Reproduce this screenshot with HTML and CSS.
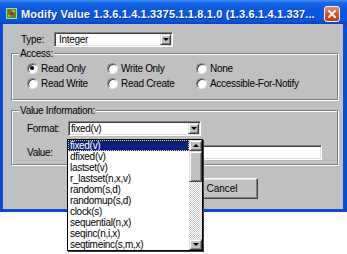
FILE: index.html
```html
<!DOCTYPE html>
<html lang="en">
<head>
  <meta charset="UTF-8">
  <title>Modify Value</title>
  <link rel="stylesheet" href="styles.css">
</head>
<body>
  <div class="window">
    <div class="titlebar">
      <svg class="app-icon" viewBox="0 0 11 11">
        <rect x="0.5" y="0.5" width="10" height="10" fill="#3f9a2a" stroke="#a6e07c"/>
        <rect x="2" y="2" width="2" height="2" fill="#d83a1e"/>
        <rect x="6" y="2" width="3" height="2" fill="#e0a020"/>
        <rect x="4" y="4" width="3" height="3" fill="#c02818"/>
        <rect x="2" y="7" width="2" height="2" fill="#e0a020"/>
        <rect x="7" y="6" width="2" height="3" fill="#d83a1e"/>
      </svg>
      <span class="title">Modify Value 1.3.6.1.4.1.3375.1.1.8.1.0 (1.3.6.1.4.1.337...</span>
      <span class="close-btn">
        <svg viewBox="0 0 14 14" width="14" height="14">
          <path d="M4 4 L10 10 M10 4 L4 10" stroke="#fff" stroke-width="2" stroke-linecap="square"/>
        </svg>
      </span>
    </div>

    <div class="client">
      <div class="type-row">
        <label>Type:</label>
        <div class="combo type-combo">
          <span class="combo-text">Integer</span>
          <span class="drop-btn"><span class="arrow-down"></span></span>
        </div>
      </div>

      <fieldset class="group access">
        <legend>Access:</legend>
        <div class="radio-grid">
          <div class="radio"><span class="radio-dot checked"></span>Read Only</div>
          <div class="radio"><span class="radio-dot"></span>Write Only</div>
          <div class="radio"><span class="radio-dot"></span>None</div>
          <div class="radio"><span class="radio-dot"></span>Read Write</div>
          <div class="radio"><span class="radio-dot"></span>Read Create</div>
          <div class="radio"><span class="radio-dot"></span>Accessible-For-Notify</div>
        </div>
      </fieldset>

      <fieldset class="group value-info">
        <legend>Value Information:</legend>
        <div class="vi-body">
          <div class="field-row">
            <label>Format:</label>
            <div class="combo format-combo">
              <span class="combo-text">fixed(v)</span>
              <span class="drop-btn"><span class="arrow-down"></span></span>

              <!-- open dropdown list -->
              <div class="droplist">
                <ul class="options">
                  <li class="selected">fixed(v)</li>
                  <li>dfixed(v)</li>
                  <li>lastset(v)</li>
                  <li>r_lastset(n,x,v)</li>
                  <li>random(s,d)</li>
                  <li>randomup(s,d)</li>
                  <li>clock(s)</li>
                  <li>sequential(n,x)</li>
                  <li>seqinc(n,i,x)</li>
                  <li>seqtimeinc(s,m,x)</li>
                </ul>
                <div class="scrollbar">
                  <span class="sb-btn"><span class="arrow-up"></span></span>
                  <span class="sb-thumb"></span>
                  <span class="sb-track"></span>
                  <span class="sb-btn"><span class="arrow-down"></span></span>
                </div>
              </div>
            </div>
          </div>
          <div class="field-row">
            <label>Value:</label>
            <div class="textbox"></div>
          </div>
        </div>
      </fieldset>

      <div class="buttons">
        <button class="btn">OK</button>
        <button class="btn">Cancel</button>
      </div>
    </div>
  </div>
</body>
</html>
```

FILE: styles.css
```css
html, body {
  height: 100%;
}

body {
  margin: 0;
  min-height: 254px;
  background: #fff;
  font-family: "Liberation Sans", Arial, sans-serif;
  font-size: 10px;
  letter-spacing: -0.3px;
  color: #000;
}

.window {
  width: 347px;
}

/* title bar */
.titlebar {
  height: 24px;
  box-sizing: border-box;
  display: flex;
  align-items: center;
  padding: 3px 7px 0 6px;
  background: linear-gradient(to bottom, #3d8ef2 0, #1666e8 3px, #0a58e2 40%, #0955de 85%, #0746c4 100%);
  color: #fff;
}

.app-icon {
  width: 11px;
  height: 11px;
  flex: none;
}

.title {
  flex: 1;
  margin-left: 4px;
  font-weight: bold;
  font-size: 11px;
  letter-spacing: 0.15px;
  white-space: nowrap;
  text-shadow: 1px 1px 0 #0a2e96;
}

.close-btn {
  width: 16px;
  height: 16px;
  box-sizing: border-box;
  display: flex;
  align-items: center;
  justify-content: center;
  border: 1px solid #f4f4f4;
  border-radius: 3px;
  background: linear-gradient(to bottom, #ee8a66, #d9542c 45%, #c23c16);
}

/* client area */
.client {
  height: 188px;
  box-sizing: border-box;
  background: #c0c0c0;
  border-style: solid;
  border-color: #0b4ad6;
  border-width: 0 4px 3px 3px;
  padding: 8px 5px 0 8px;
}

.type-row {
  display: flex;
  align-items: center;
  height: 15px;
  padding-left: 10px;
}

.type-row label {
  width: 33px;
}

.combo {
  position: relative;
  display: flex;
  align-items: center;
  height: 15px;
  box-sizing: border-box;
  background: #fff;
  border: 1px solid;
  border-color: #808080 #fff #fff #808080;
  box-shadow: inset 1px 1px #404040, inset -1px -1px #dfdfdf;
}

.type-combo {
  width: 119px;
}

.format-combo {
  width: 133px;
}

.combo-text {
  flex: 1;
  padding-left: 4px;
}

.format-combo .combo-text {
  padding-left: 2px;
}

.drop-btn,
.sb-btn {
  display: flex;
  align-items: center;
  justify-content: center;
  box-sizing: border-box;
  background: #c0c0c0;
  border: 1px solid;
  border-color: #dfdfdf #404040 #404040 #dfdfdf;
  box-shadow: inset 1px 1px #fff, inset -1px -1px #808080;
}

.drop-btn {
  width: 11px;
  height: 11px;
  margin-right: 1px;
}

.arrow-down,
.arrow-up {
  width: 0;
  height: 0;
  border-left: 3px solid transparent;
  border-right: 3px solid transparent;
}

.arrow-down {
  border-top: 3px solid #000;
}

.arrow-up {
  border-bottom: 3px solid #000;
}

/* group boxes */
.group {
  margin: 0;
  padding: 0;
  min-width: 0;
  border: 1px solid #808080;
  box-shadow: inset 1px 1px #fff, 1px 1px #fff;
}

.group legend {
  margin-left: 7px;
  padding: 0 1px;
  line-height: 11px;
  background: #c0c0c0;
}

.access {
  margin-top: 1px;
}

.radio-grid {
  display: grid;
  grid-template-columns: 80px 89px 1fr;
  grid-auto-rows: 15px;
  padding: 2px 0 8px 15px;
}

.radio {
  display: flex;
  align-items: center;
  gap: 3px;
  white-space: nowrap;
}

.radio-dot {
  position: relative;
  width: 11px;
  height: 11px;
  box-sizing: border-box;
  border-radius: 50%;
  background: #fff;
  border: 1px solid;
  border-color: #808080 #e8e8e8 #e8e8e8 #808080;
  box-shadow: inset 1px 1px #404040;
}

.radio-dot.checked::after {
  content: "";
  position: absolute;
  left: 2px;
  top: 2px;
  width: 4px;
  height: 4px;
  border-radius: 50%;
  background: #000;
}

.value-info {
  margin-top: 5px;
}

.vi-body {
  padding: 5px 0 4px 15px;
}

.field-row {
  display: flex;
  align-items: center;
}

.field-row + .field-row {
  margin-top: 9px;
}

.field-row label {
  width: 41px;
}

.textbox {
  width: 254px;
  height: 15px;
  box-sizing: border-box;
  background: #fff;
  border: 1px solid;
  border-color: #808080 #fff #fff #808080;
  box-shadow: inset 1px 1px #404040, inset -1px -1px #dfdfdf;
}

/* dropdown popup */
.droplist {
  position: absolute;
  left: -2px;
  top: 17px;
  z-index: 10;
  width: 136px;
  height: 112px;
  box-sizing: border-box;
  display: flex;
  background: #fff;
  border: 1px solid #000;
  box-shadow: 1px 1px 0 #404040;
}

.options {
  flex: 1;
  list-style: none;
  margin: 0;
  padding: 0;
}

.options li {
  height: 11px;
  line-height: 11px;
  padding-left: 2px;
  white-space: nowrap;
}

.options li.selected {
  background: #0a2080;
  color: #fff;
  outline: 1px dotted #e8d070;
  outline-offset: -1px;
}

.scrollbar {
  width: 13px;
  display: flex;
  flex-direction: column;
  background: repeating-conic-gradient(#fff 0 25%, #c8c8c8 0 50%) 0 0 / 2px 2px;
}

.sb-btn {
  height: 11px;
  flex: none;
}

.sb-thumb {
  height: 31px;
  flex: none;
  box-sizing: border-box;
  background: #c0c0c0;
  border: 1px solid;
  border-color: #dfdfdf #404040 #404040 #dfdfdf;
  box-shadow: inset 1px 1px #fff, inset -1px -1px #808080;
}

.sb-track {
  flex: 1;
}

/* buttons */
.buttons {
  display: flex;
  justify-content: flex-end;
  gap: 8px;
  margin-top: 13px;
  padding-right: 80px;
}

.btn {
  width: 72px;
  height: 21px;
  padding: 0;
  font: inherit;
  color: #000;
  background: #c0c0c0;
  border: 1px solid;
  border-color: #fff #404040 #404040 #fff;
  box-shadow: inset -1px -1px #808080, inset 1px 1px #dfdfdf;
}
```
